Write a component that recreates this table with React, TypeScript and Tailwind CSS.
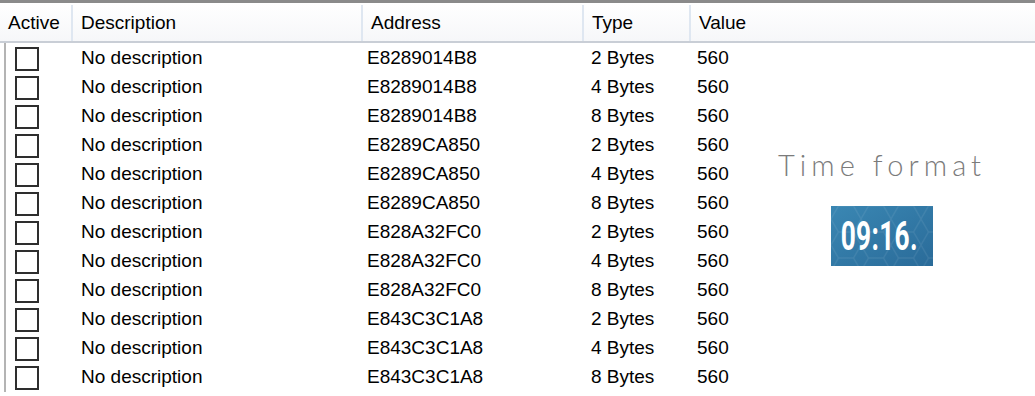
import React from "react";

type Row = { address: string; type: string; value: string };

const rows: Row[] = [
  { address: "E8289014B8", type: "2 Bytes", value: "560" },
  { address: "E8289014B8", type: "4 Bytes", value: "560" },
  { address: "E8289014B8", type: "8 Bytes", value: "560" },
  { address: "E8289CA850", type: "2 Bytes", value: "560" },
  { address: "E8289CA850", type: "4 Bytes", value: "560" },
  { address: "E8289CA850", type: "8 Bytes", value: "560" },
  { address: "E828A32FC0", type: "2 Bytes", value: "560" },
  { address: "E828A32FC0", type: "4 Bytes", value: "560" },
  { address: "E828A32FC0", type: "8 Bytes", value: "560" },
  { address: "E843C3C1A8", type: "2 Bytes", value: "560" },
  { address: "E843C3C1A8", type: "4 Bytes", value: "560" },
  { address: "E843C3C1A8", type: "8 Bytes", value: "560" },
];

const cols = "grid grid-cols-[73px_290px_221px_107px_1fr]";

function HeaderCell({ label, last }: { label: string; last?: boolean }) {
  return (
    <div
      className={
        "flex h-full items-center pl-[8px] " +
        (last ? "" : "border-r-2 border-[#dfe7f1]")
      }
    >
      {label}
    </div>
  );
}

function Checkbox() {
  return <div className="h-[24px] w-[24px] border-2 border-[#2e2e2e] bg-white" />;
}

function Clock() {
  return (
    <div className="relative flex h-[60px] w-[102px] items-center justify-center overflow-hidden bg-gradient-to-br from-[#3a87b3] to-[#2a6b99]">
      <svg className="absolute inset-0" width="102" height="60">
        <defs>
          <pattern id="hex" width="30" height="26" patternUnits="userSpaceOnUse">
            <path
              d="M7.5 0 L22.5 0 L30 13 L22.5 26 L7.5 26 L0 13 Z"
              fill="none"
              stroke="rgba(255,255,255,0.07)"
              strokeWidth="1.5"
            />
          </pattern>
        </defs>
        <rect width="102" height="60" fill="url(#hex)" />
      </svg>
      <span className="relative -ml-[6px] inline-block origin-center scale-x-[0.64] font-['Roboto',sans-serif] text-[41px] font-bold leading-none tracking-[0.5px] text-white">
        09:16.
      </span>
    </div>
  );
}

export default function App() {
  return (
    <div className="h-[396px] w-[1035px] overflow-hidden bg-white font-['Liberation_Sans',Arial,sans-serif] text-[19px] text-black">
      <div className="h-[3px] bg-[#8a8a8a]" />
      <div className={cols + " h-[38px] items-center bg-gradient-to-b from-[#ffffff] to-[#f6f7f9] pt-[2px]"}>
        <HeaderCell label="Active" />
        <HeaderCell label="Description" />
        <HeaderCell label="Address" />
        <HeaderCell label="Type" />
        <HeaderCell label="Value" last />
      </div>
      <div className="h-[2px] bg-[#c9ced6]" />
      <div className="ml-[4px] flex border-l-2 border-[#b4b4b4]">
        <div className="w-[754px] pt-[1px]">
          {rows.map((r, i) => (
            <div key={i} className="grid h-[29px] grid-cols-[67px_288px_223px_107px_1fr] items-center">
              <div className="pl-[9px]">
                <Checkbox />
              </div>
              <div className="pl-[8px]">No description</div>
              <div className="pl-[6px]">{r.address}</div>
              <div className="pl-[7px]">{r.type}</div>
              <div className="pl-[6px]">{r.value}</div>
            </div>
          ))}
        </div>
        <div className="flex flex-1 flex-col items-center pt-[107px] pr-[31px]">
          <div className="font-['Lato',sans-serif] text-[29px] font-light leading-none tracking-[0.175em] text-[#7b7b7b]">
            Time format
          </div>
          <div className="mt-[27px]">
            <Clock />
          </div>
        </div>
      </div>
    </div>
  );
}
